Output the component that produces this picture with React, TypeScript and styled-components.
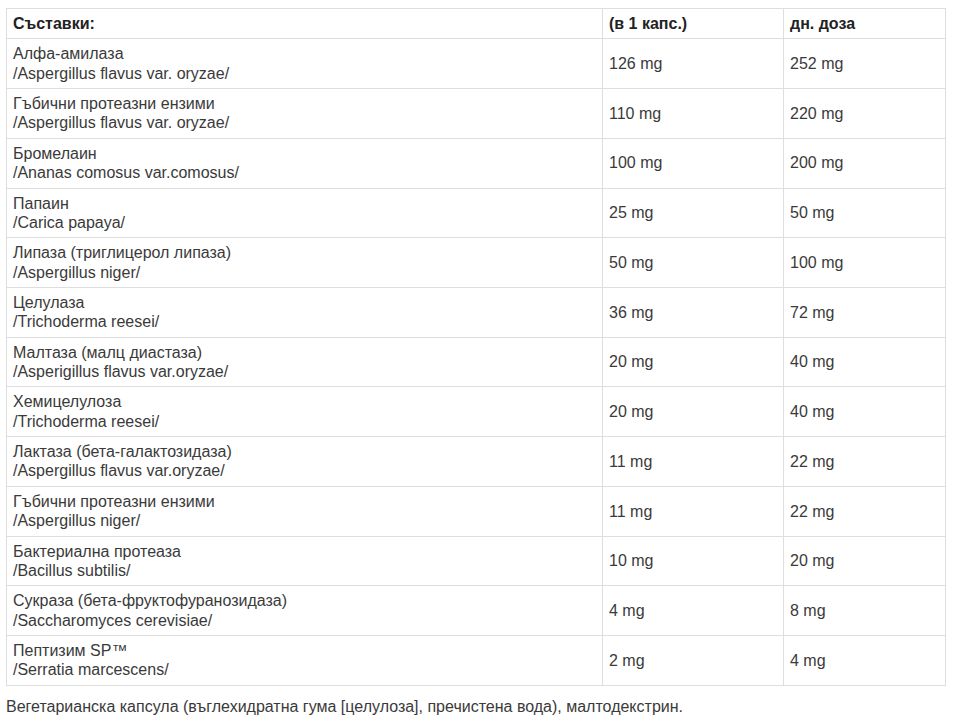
import React from "react";
import styled, { createGlobalStyle } from "styled-components";

const Global = createGlobalStyle`
  html, body { margin: 0; padding: 0; background: #fff; }
  body { font-family: "Liberation Sans", Arial, sans-serif; color: #333; }
`;

const Page = styled.div`
  padding: 8px 9px 0 6px;
`;

const Table = styled.table`
  width: 939px;
  border-collapse: collapse;
  table-layout: fixed;
  font-size: 16px;
  line-height: 19.36px;
`;

const Cell = styled.td<{ $head?: boolean }>`
  border: 1px solid #dedede;
  padding: 5px 6px;
  vertical-align: middle;
  text-align: left;
  font-weight: ${(p) => (p.$head ? "bold" : "normal")};
  color: ${(p) => (p.$head ? "#222" : "#3a3a3a")};
`;

const Latin = styled.span`
  display: block;
`;

const Note = styled.p`
  margin: 11px 0 0 0;
  font-size: 16px;
  line-height: 20px;
  color: #3a3a3a;
`;

const rows: [string, string, string, string][] = [
  ["Алфа-амилаза", "/Aspergillus flavus var. oryzae/", "126 mg", "252 mg"],
  ["Гъбични протеазни ензими", "/Aspergillus flavus var. oryzae/", "110 mg", "220 mg"],
  ["Бромелаин", "/Ananas comosus var.comosus/", "100 mg", "200 mg"],
  ["Папаин", "/Carica papaya/", "25 mg", "50 mg"],
  ["Липаза (триглицерол липаза)", "/Aspergillus niger/", "50 mg", "100 mg"],
  ["Целулаза", "/Trichoderma reesei/", "36 mg", "72 mg"],
  ["Малтаза (малц диастаза)", "/Asperigillus flavus var.oryzae/", "20 mg", "40 mg"],
  ["Хемицелулоза", "/Trichoderma reesei/", "20 mg", "40 mg"],
  ["Лактаза (бета-галактозидаза)", "/Aspergillus flavus var.oryzae/", "11 mg", "22 mg"],
  ["Гъбични протеазни ензими", "/Aspergillus niger/", "11 mg", "22 mg"],
  ["Бактериална протеаза", "/Bacillus subtilis/", "10 mg", "20 mg"],
  ["Сукраза (бета-фруктофуранозидаза)", "/Saccharomyces cerevisiae/", "4 mg", "8 mg"],
  ["Пептизим SP™", "/Serratia marcescens/", "2 mg", "4 mg"],
];

export default function App() {
  return (
    <Page>
      <Global />
      <Table>
        <colgroup>
          <col style={{ width: 596 }} />
          <col style={{ width: 181 }} />
          <col style={{ width: 162 }} />
        </colgroup>
        <tbody>
          <tr>
            <Cell $head>Съставки:</Cell>
            <Cell $head>(в 1 капс.)</Cell>
            <Cell $head>дн. доза</Cell>
          </tr>
          {rows.map((r, i) => (
            <tr key={i}>
              <Cell>
                {r[0]}
                <Latin>{r[1]}</Latin>
              </Cell>
              <Cell>{r[2]}</Cell>
              <Cell>{r[3]}</Cell>
            </tr>
          ))}
        </tbody>
      </Table>
      <Note>
        Вегетарианска капсула (въглехидратна гума [целулоза], пречистена вода), малтодекстрин.
      </Note>
    </Page>
  );
}
